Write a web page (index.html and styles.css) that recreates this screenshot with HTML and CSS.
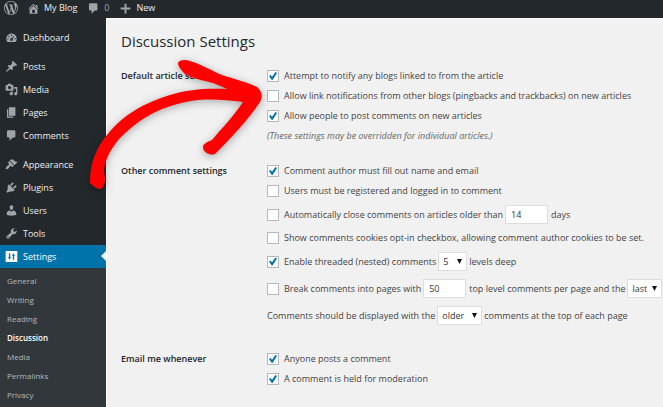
FILE: index.html
```html
<!DOCTYPE html>
<html lang="en">
<head>
  <meta charset="UTF-8">
  <title>Discussion Settings</title>
  <link rel="stylesheet" href="styles.css">
</head>
<body>
  <!-- admin bar -->
  <header class="adminbar">
    <a class="bar-logo" href="#" aria-label="WordPress">
      <svg class="icon logo" viewBox="0 0 20 20"><path d="M20 10c0-5.51-4.49-10-10-10C4.48 0 0 4.49 0 10c0 5.52 4.48 10 10 10 5.51 0 10-4.48 10-10zM7.78 15.37L4.37 6.22c.55-.02 1.17-.08 1.17-.08.5-.06.44-1.13-.06-1.11 0 0-1.45.11-2.37.11-.18 0-.37 0-.58-.01C4.12 2.69 6.87 1.11 10 1.11c2.33 0 4.45.87 6.05 2.34-.68-.11-1.65.39-1.65 1.58 0 .74.45 1.36.9 2.1.35.61.55 1.36.55 2.46 0 1.49-1.4 5-1.4 5l-3.03-8.37c.54-.02.82-.17.82-.17.5-.05.44-1.25-.06-1.22 0 0-1.44.12-2.38.12-.87 0-2.33-.12-2.33-.12-.5-.03-.56 1.2-.06 1.22l.92.08 1.26 3.41zM17.41 10c.24-.64.74-1.87.43-4.25.7 1.29 1.05 2.71 1.05 4.25 0 3.29-1.73 6.24-4.4 7.78.97-2.59 1.94-5.2 2.92-7.78zM6.1 18.09C3.12 16.65 1.11 13.53 1.11 10c0-1.3.23-2.48.72-3.59C3.25 10.3 4.67 14.2 6.1 18.09zm4.03-6.63l2.58 6.98c-.86.29-1.76.45-2.71.45-.79 0-1.57-.11-2.29-.33.81-2.38 1.62-4.74 2.42-7.1z"/></svg>
    </a>
    <a class="bar-site" href="#">
      <svg class="icon" viewBox="0 0 20 20"><path fill-rule="evenodd" d="M16 8.5l1.53 1.53-1.06 1.06L10 4.6l-6.47 6.49-1.06-1.06L10 2.5l4 4v-2h2v4zm-6-2.46l6 5.99V18H4v-5.97zM12 17v-5H8v5h4z"/></svg>
      <span>My Blog</span>
    </a>
    <a class="bar-comments" href="#">
      <svg class="icon" viewBox="0 0 20 20"><path d="M5 2h9c1.1 0 2 .9 2 2v7c0 1.1-.9 2-2 2h-2l-5 5v-5H5c-1.1 0-2-.9-2-2V4c0-1.1.9-2 2-2z"/></svg>
      <span class="count">0</span>
    </a>
    <a class="bar-new" href="#">
      <svg class="icon" viewBox="0 0 20 20"><path d="M8.5 2.5h3v6h6v3h-6v6h-3v-6h-6v-3h6z"/></svg>
      <span>New</span>
    </a>
  </header>

  <div class="wrap">
    <!-- side menu -->
    <nav class="menu">
      <ul class="menu-group">
        <li><a href="#"><svg class="icon" viewBox="0 0 20 20"><path fill-rule="evenodd" d="M3.76 17h12.48c1.1-1.37 1.76-3.11 1.76-5 0-4.42-3.58-8-8-8s-8 3.58-8 8c0 1.89.66 3.63 1.76 5zM10 5.5a1 1 0 1 1 0 2 1 1 0 0 1 0-2zM6 7.2a1 1 0 1 1 0 2 1 1 0 0 1 0-2zM4.5 11a1 1 0 1 1 0 2 1 1 0 0 1 0-2zM15.5 11a1 1 0 1 1 0 2 1 1 0 0 1 0-2zM14.4 7l-2.7 5.2a2 2 0 1 1-1.9-1z"/></svg>Dashboard</a></li>
      </ul>
      <ul class="menu-group">
        <li><a href="#"><svg class="icon" viewBox="0 0 20 20"><path d="M10.44 3.02l1.82-1.82 6.36 6.35-1.83 1.82c-1.05-.68-2.48-.57-3.41.36l-.75.75c-.92.93-1.04 2.35-.35 3.41l-1.83 1.82-2.41-2.41-2.8 2.79c-.42.42-3.38 2.71-3.8 2.29s1.86-3.39 2.28-3.81l2.79-2.79L4.1 9.36l1.83-1.82c1.05.69 2.48.57 3.4-.36l.75-.75c.93-.92 1.05-2.35.36-3.41z"/></svg>Posts</a></li>
        <li><a href="#"><svg class="icon" viewBox="0 0 20 20"><path fill-rule="evenodd" d="M13 11V4c0-.55-.45-1-1-1h-1.67L9 1H5L3.67 3H2c-.55 0-1 .45-1 1v7c0 .55.45 1 1 1h10c.55 0 1-.45 1-1zM7 4.5c1.38 0 2.5 1.12 2.5 2.5S8.38 9.5 7 9.5 4.5 8.38 4.5 7 5.62 4.5 7 4.5zM14 6h5v10.5c0 1.38-1.12 2.5-2.5 2.5S14 17.88 14 16.5s1.12-2.5 2.5-2.5c.17 0 .34.02.5.05V9h-3V6zm-4 8.05V13h2v3.5c0 1.38-1.12 2.5-2.5 2.5S7 17.88 7 16.5 8.12 14 9.5 14c.17 0 .34.02.5.05z"/></svg>Media</a></li>
        <li><a href="#"><svg class="icon" viewBox="0 0 20 20"><path d="M6 15V2h10v13H6zm-1 1h8v2H3V5h2v11z"/></svg>Pages</a></li>
        <li><a href="#"><svg class="icon" viewBox="0 0 20 20"><path d="M5 2h9c1.1 0 2 .9 2 2v7c0 1.1-.9 2-2 2h-2l-5 5v-5H5c-1.1 0-2-.9-2-2V4c0-1.1.9-2 2-2z"/></svg>Comments</a></li>
      </ul>
      <ul class="menu-group">
        <li><a href="#"><svg class="icon" viewBox="0 0 20 20"><path d="M14.48 11.06L7.41 3.99l1.5-1.5c.5-.56 2.3-.47 3.51.32 1.21.8 1.43 1.28 2.91 2.1 1.18.64 2.45 1.26 4.45.85zm-.71.71L6.7 4.7 4.93 6.47c-.39.39-.39 1.02 0 1.41l1.06 1.06c.39.39.39 1.03 0 1.42-.6.6-1.43 1.11-2.21 1.69-.35.26-.7.53-1.01.84C1.43 14.23.4 16.08 1.4 17.07c.99 1 2.84-.03 4.18-1.36.31-.31.58-.66.85-1.02.57-.78 1.08-1.61 1.69-2.21.39-.39 1.02-.39 1.41 0l1.06 1.06c.39.39 1.02.39 1.41 0z"/></svg>Appearance</a></li>
        <li><a href="#"><svg class="icon" viewBox="0 0 20 20"><path d="M13.11 4.36L9.87 7.6 8 5.73l3.24-3.24c.35-.34 1.05-.2 1.56.32.52.51.66 1.21.31 1.55zm-8 1.77l.91-1.12 9.01 9.01-1.19.84c-.71.71-2.63 1.16-3.82 1.16H8.14L4.9 17.26c-.59.59-1.54.59-2.12 0-.59-.58-.59-1.53 0-2.12l1.24-1.24v-3.88c0-1.13.4-2.86 1.09-3.89zm7.26 3.97l3.24-3.24c.34-.35 1.04-.21 1.55.31.52.51.66 1.21.31 1.55l-3.24 3.25z"/></svg>Plugins</a></li>
        <li><a href="#"><svg class="icon" viewBox="0 0 20 20"><path d="M10 9.25c-2.27 0-2.73-3.44-2.73-3.44C7 4.02 7.82 2 9.97 2c2.16 0 2.98 2.02 2.71 3.81 0 0-.41 3.44-2.68 3.44zm0 2.57L12.72 10c2.39 0 4.52 2.33 4.52 4.53v2.49s-3.65 1.13-7.24 1.13c-3.65 0-7.24-1.13-7.24-1.13v-2.49c0-2.25 1.94-4.48 4.47-4.48z"/></svg>Users</a></li>
        <li><a href="#"><svg class="icon" viewBox="0 0 20 20"><path fill-rule="evenodd" d="M16.68 9.77c-1.34 1.34-3.3 1.67-4.95.99l-5.41 6.52c-.99.99-2.59.99-3.58 0s-.99-2.59 0-3.57l6.52-5.42c-.68-1.65-.35-3.61.99-4.95 1.28-1.28 3.12-1.62 4.72-1.06l-2.89 2.89 2.82 2.82 2.86-2.87c.53 1.58.18 3.39-1.08 4.65zM3.81 16.21c.4.39 1.04.39 1.43 0 .4-.4.4-1.04 0-1.43-.39-.4-1.03-.4-1.43 0-.39.39-.39 1.03 0 1.43z"/></svg>Tools</a></li>
        <li class="current"><a href="#"><svg class="icon" viewBox="0 0 20 20"><path fill-rule="evenodd" d="M2 1.500h16a1 1 0 0 1 1 1v15a1 1 0 0 1-1 1H2a1 1 0 0 1-1-1v-15a1 1 0 0 1 1-1zM6 5v6H4.500L7 15l2.500-4H8V5zM12 15V9h-1.500L13 5l2.500 4H14v6z"/></svg>Settings</a></li>
      </ul>
      <ul class="submenu">
        <li><a href="#">General</a></li>
        <li><a href="#">Writing</a></li>
        <li><a href="#">Reading</a></li>
        <li><a class="active" href="#">Discussion</a></li>
        <li><a href="#">Media</a></li>
        <li><a href="#">Permalinks</a></li>
        <li><a href="#">Privacy</a></li>
      </ul>
    </nav>

    <main class="content">
      <h1>Discussion Settings</h1>
      <form>
        <section class="setting">
          <h2>Default article settings</h2>
          <div class="options">
            <label class="row"><input type="checkbox" checked>Attempt to notify any blogs linked to from the article</label>
            <label class="row"><input type="checkbox">Allow link notifications from other blogs (pingbacks and trackbacks) on new articles</label>
            <label class="row"><input type="checkbox" checked>Allow people to post comments on new articles</label>
            <p class="row hint">(These settings may be overridden for individual articles.)</p>
          </div>
        </section>

        <section class="setting comments">
          <h2>Other comment settings</h2>
          <div class="options">
            <label class="row"><input type="checkbox" checked>Comment author must fill out name and email</label>
            <label class="row"><input type="checkbox">Users must be registered and logged in to comment</label>
            <div class="row field">
              <input type="checkbox" id="close">
              <label for="close">Automatically close comments on articles older than</label>
              <input type="text" value="14" aria-label="Days before closing">
              <span>days</span>
            </div>
            <label class="row"><input type="checkbox">Show comments cookies opt-in checkbox, allowing comment author cookies to be set.</label>
            <div class="row field">
              <input type="checkbox" id="thread" checked>
              <label for="thread">Enable threaded (nested) comments</label>
              <select class="depth" aria-label="Levels deep"><option>5</option></select>
              <span>levels deep</span>
            </div>
            <div class="row field">
              <input type="checkbox" id="paged">
              <label for="paged">Break comments into pages with</label>
              <input type="text" value="50" aria-label="Comments per page">
              <span>top level comments per page and the</span>
              <select class="page" aria-label="Default page"><option>last</option></select>
            </div>
            <div class="row field">
              <label for="order">Comments should be displayed with the</label>
              <select class="order" id="order"><option>older</option></select>
              <span>comments at the top of each page</span>
            </div>
          </div>
        </section>

        <section class="setting">
          <h2>Email me whenever</h2>
          <div class="options">
            <label class="row"><input type="checkbox" checked>Anyone posts a comment</label>
            <label class="row"><input type="checkbox" checked>A comment is held for moderation</label>
          </div>
        </section>
      </form>
    </main>
  </div>

  <!-- red arrow pointing at the pingback option -->
  <svg class="arrow" viewBox="0 0 190 140" width="190" height="140" aria-hidden="true">
    <path d="M10 132C10 122 11 113 15 104C19 95 21 91 27 84C45 62 65 52 90 44C109 38 128 37 147 38C143 36 138 34 133 32C122 29 114 28 105 23C101 19 98 15 98 12C99 9 105 8 110 10C123 14 132 20 142 24C154 28 167 31 177 36C182 40 183 46 180 51C168 69 151 87 135 103C131 105 123 102 123 96C123 93 127 91 132 89C142 77 153 66 163 51C148 49 133 48 118 49C88 53 64 63 40 87C33 95 25 107 24 119C24 125 26 126 25 131C23 136 22 138 20 138C17 138 13 135 10 132Z"/>
  </svg>
</body>
</html>
```
FILE: styles.css
```css
* { box-sizing: border-box; }
body { margin: 0; background: #f1f1f1; color: #444; font: 9px/20px "Open Sans", "Noto Sans", sans-serif; overflow: hidden; }
h1, h2, p, ul { margin: 0; padding: 0; }
ul { list-style: none; }
a { color: inherit; text-decoration: none; }
.icon { width: 13px; height: 13px; flex: none; fill: #a0a5aa; }

/* admin bar */
.adminbar { display: flex; height: 18px; padding: 0 4px; background: #23282d; color: #eee; line-height: 16px; font-weight: 500; }
.adminbar a { display: flex; align-items: center; height: 16px; }
.adminbar .logo { width: 14px; height: 14px; }
.bar-site { margin-left: 9px; gap: 4px; }
.bar-comments { margin-left: 10px; gap: 4px; }
.bar-new { margin-left: 10px; gap: 4px; }
.count { color: #a0a5aa; }

/* side menu */
.wrap { display: flex; min-height: calc(100vh - 18px); }
.menu { flex: none; width: 106px; padding-top: 8px; background: #23282d; color: #eee; display: flex; flex-direction: column; }
.menu-group + .menu-group { margin-top: 6px; }
.menu-group a { position: relative; display: flex; align-items: center; gap: 5px; height: 23px; padding-left: 5px; font-weight: 500; }
.menu .current a { background: #0073aa; color: #fff; }
.current .icon { fill: #fff; }
.current a::after { content: ""; position: absolute; right: 0; top: 6px; border: 5px solid transparent; border-left: 0; border-right-color: #f1f1f1; }
.submenu { flex: 1; padding: 3px 7px; background: #32373c; color: #b4b9be; font-size: 8px; line-height: 19px; }
.submenu .active { color: #fff; font-weight: 600; }

/* settings form */
.content { flex: 1; min-width: 0; padding: 10px 0 0 14px; border-top: 1px solid #fff; border-left: 1px solid #fff; }
h1 { margin-bottom: 13px; color: #23282d; font-size: 15px; line-height: 24px; font-weight: 400; }
.setting { display: grid; grid-template-columns: 146px 1fr; padding-bottom: 15px; }
.comments { padding-bottom: 20px; }
h2 { color: #23282d; font-size: 9px; line-height: 20px; font-weight: 600; }
.row { display: flex; align-items: center; gap: 2px; height: 20px; white-space: nowrap; }
.field { height: 27px; }
.hint { color: #666; font-style: italic; }

input, select { margin: 0; border: 1px solid #ddd; background: #fff; color: #32373c; font: inherit; border-radius: 0; }
input[type="checkbox"] { appearance: none; flex: none; display: grid; place-items: center; width: 12px; height: 12px; margin-right: 3px; border-color: #b4b9be; }
input[type="checkbox"]:checked::before { content: ""; width: 8px; height: 8px; background: #0073aa; clip-path: polygon(0 50%, 18% 36%, 38% 58%, 80% 0, 100% 12%, 44% 100%, 34% 100%); }
input[type="text"] { width: 43px; height: 19px; margin-right: 1px; padding: 0 5px; }
select { appearance: none; height: 19px; padding: 0 4px; background: #fff url("data:image/svg+xml,%3Csvg xmlns='http://www.w3.org/2000/svg' width='5' height='5'%3E%3Cpath d='M0 0h5L2.5 5z' fill='%23111'/%3E%3C/svg%3E") no-repeat right 4px center; line-height: 17px; }
.depth { width: 29px; }
.page { width: 35px; }
.order { width: 45px; }

.arrow { position: absolute; left: 80px; top: 51px; fill: #f00; overflow: visible; filter: drop-shadow(0 2px 4px rgba(0, 0, 0, .3)); pointer-events: none; }
```
